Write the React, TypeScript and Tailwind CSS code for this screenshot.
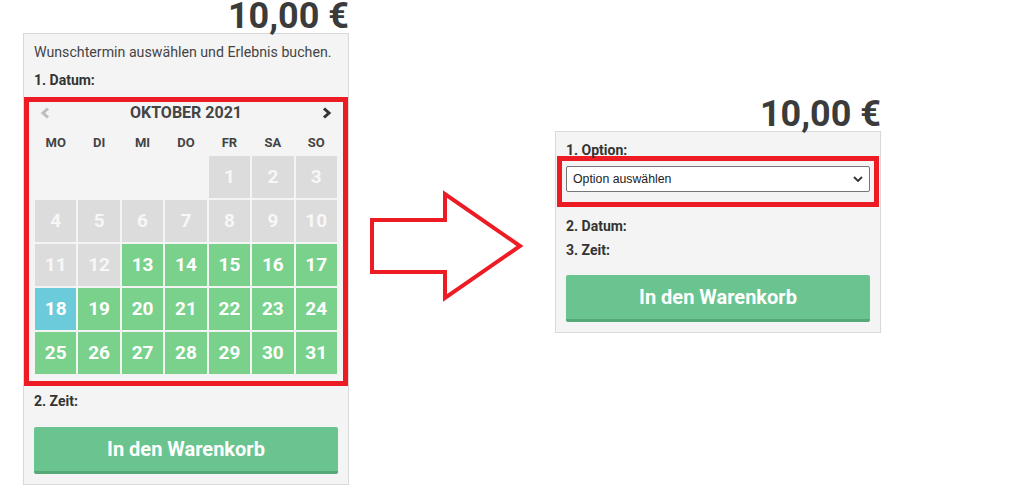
import React from "react";

const FONT = { fontFamily: "Roboto, 'Noto Sans', sans-serif" };

type Cell = { d: number | null; kind: "empty" | "past" | "free" | "today" };

function buildCells(): Cell[] {
  const cells: Cell[] = [];
  for (let i = 0; i < 4; i++) cells.push({ d: null, kind: "empty" });
  for (let d = 1; d <= 31; d++) {
    let kind: Cell["kind"] = "free";
    if (d <= 12) kind = "past";
    if (d === 18) kind = "today";
    cells.push({ d, kind });
  }
  return cells;
}

function Price() {
  return (
    <div className="h-[33px] pt-[1px] text-right text-[36px] font-bold leading-[32px] text-[#3b3b3b]">
      <span className="block -mt-[1px]">10,00 €</span>
    </div>
  );
}

function CartButton() {
  return (
    <button className="flex h-[47px] w-full items-center justify-center rounded-[2px] border-b-[3px] border-[#57a877] bg-[#69c48f] text-[20px] font-bold text-white">
      In den Warenkorb
    </button>
  );
}

function Calendar() {
  const days = ["MO", "DI", "MI", "DO", "FR", "SA", "SO"];
  const cells = buildCells();
  return (
    <div className="mt-[7px] border-[5px] border-[#ed1c24] pb-[7px]">
      <div className="flex h-[22px] items-center justify-between px-[11px]">
        <svg width="10" height="12" viewBox="0 0 10 12">
          <path d="M8 1.5 L3 6 L8 10.5" fill="none" stroke="#bdbdbd" strokeWidth="3" />
        </svg>
        <div className="text-[16px] font-bold text-[#444]">OKTOBER 2021</div>
        <svg width="10" height="12" viewBox="0 0 10 12">
          <path d="M2 1.5 L7 6 L2 10.5" fill="none" stroke="#333" strokeWidth="3" />
        </svg>
      </div>
      <div className="mt-[8px] grid grid-cols-7 gap-x-[2px] px-[6px]">
        {days.map((d) => (
          <div key={d} className="flex h-[22px] items-center justify-center text-[13px] font-bold text-[#444]">
            {d}
          </div>
        ))}
      </div>
      <div className="mt-[2px] grid grid-cols-7 gap-[2px] px-[6px]">
        {cells.map((c, i) => {
          if (c.kind === "empty") return <div key={i} className="h-[42px]" />;
          const bg =
            c.kind === "past"
              ? "bg-[#dcdcdc] text-[#f7f7f7]"
              : c.kind === "today"
              ? "bg-[#6ccbda] text-white"
              : "bg-[#79d18b] text-white";
          return (
            <div key={i} className={`flex h-[42px] items-center justify-center text-[19px] font-bold ${bg}`}>
              {c.d}
            </div>
          );
        })}
      </div>
    </div>
  );
}

function Arrow() {
  return (
    <svg width="156" height="112" viewBox="0 0 156 112" className="ml-[19px] mt-[190px] shrink-0">
      <polygon
        points="4,30 77,30 77,4 152,56 77,108 77,82 4,82"
        fill="white"
        stroke="#ed1c24"
        strokeWidth="4"
        strokeLinejoin="miter"
      />
    </svg>
  );
}

export default function App() {
  return (
    <div className="flex min-h-[501px] w-[1013px] items-start bg-white pl-[23px]" style={FONT}>
      {/* Left column */}
      <div className="w-[326px] shrink-0">
        <Price />
        <div className="border border-[#d9d9d9] bg-[#f4f4f4] pb-[10px] pt-[8px]">
          <div className="px-[10px] text-[14.2px] leading-[20px] text-[#444]">
            Wunschtermin auswählen und Erlebnis buchen.
          </div>
          <div className="mt-[8px] px-[10px] text-[14px] font-bold leading-[20px] text-[#333]">1. Datum:</div>
          <Calendar />
          <div className="mt-[5px] px-[10px] text-[14px] font-bold leading-[20px] text-[#333]">2. Zeit:</div>
          <div className="mt-[16px] px-[10px]">
            <CartButton />
          </div>
        </div>
      </div>

      <Arrow />

      {/* Right column */}
      <div className="ml-[31px] mt-[98px] w-[326px] shrink-0">
        <Price />
        <div className="border border-[#d9d9d9] bg-[#f4f4f4] pb-[10px] pt-[10px]">
          <div className="relative top-[1px] px-[10px] text-[14px] font-bold leading-[14px] text-[#333]">1. Option:</div>
          <div className="mx-[1px] border-[5px] border-[#ed1c24] px-[4px] pb-[10px] pt-[5px]">
            <div
              className="flex h-[26px] items-center justify-between rounded-[2px] border border-[#767676] bg-white pl-[6px] pr-[6px] text-[12.3px] text-[#222]"
              style={{ fontFamily: "'Liberation Sans', Arial, sans-serif" }}
            >
              <span>Option auswählen</span>
              <svg width="10" height="6" viewBox="0 0 10 6">
                <path d="M1 1 L5 5 L9 1" fill="none" stroke="#333" strokeWidth="1.8" />
              </svg>
            </div>
          </div>
          <div className="mt-[7px] px-[10px] text-[14px] font-bold leading-[24px] text-[#333]">2. Datum:</div>
          <div className="px-[10px] text-[14px] font-bold leading-[24px] text-[#333]">3. Zeit:</div>
          <div className="mt-[13px] px-[10px]">
            <CartButton />
          </div>
        </div>
      </div>
    </div>
  );
}
